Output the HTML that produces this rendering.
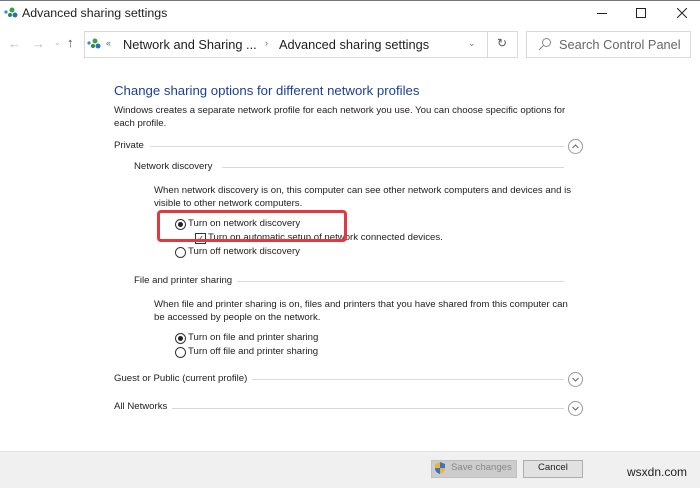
<!DOCTYPE html>
<html><head><style>
body{margin:0;width:700px;height:487px;background:#fff;font-family:"Liberation Sans",sans-serif;position:relative;overflow:hidden;color:#1e1e1e}
.a{position:absolute;white-space:nowrap}
.s{font-size:9.6px}
.line{position:absolute;height:1px;background:#d9d9d9}
.circ{position:absolute;width:15px;height:15px}
.rad{position:absolute;width:9px;height:9px;border:1px solid #333;border-radius:50%;background:#fff}
.rad.on::after{content:"";position:absolute;left:2px;top:2px;width:5px;height:5px;border-radius:50%;background:#222}
</style></head><body>
<div style="position:absolute;left:0;top:0;width:700px;height:1px;background:#777"></div>
<svg class="a" style="left:4px;top:6px" width="14" height="12"><circle cx="2" cy="6" r="1.6" fill="#2a8fd6"/><circle cx="8" cy="4" r="2.5" fill="#3aa04a"/><circle cx="11" cy="9" r="2.5" fill="#2a6fc0"/><circle cx="6" cy="9" r="2" fill="#2d8a3e"/></svg>
<div class="a" style="left:22px;top:6px;font-size:12.4px">Advanced sharing settings</div>
<div class="a" style="left:597px;top:13px;width:10px;height:1px;background:#222"></div>
<div class="a" style="left:636px;top:8px;width:8px;height:8px;border:1px solid #222"></div>
<svg class="a" style="left:677px;top:8px" width="10" height="10"><path d="M0 0L10 10M10 0L0 10" stroke="#222" stroke-width="1"/></svg>
<div class="a" style="left:8px;top:36px;font-size:13px;color:#bbb">←</div>
<div class="a" style="left:32px;top:36px;font-size:13px;color:#bbb">→</div>
<div class="a" style="left:54px;top:38px;font-size:8px;color:#bbb">⌄</div>
<div class="a" style="left:67px;top:35px;font-size:13px;color:#444">↑</div>
<div class="a" style="left:84px;top:31px;width:432px;height:25px;border:1px solid #d9d9d9"></div>
<div class="a" style="left:487px;top:31px;width:1px;height:26px;background:#d9d9d9"></div>
<svg class="a" style="left:87px;top:37px" width="14" height="12"><circle cx="2" cy="6" r="1.6" fill="#2a8fd6"/><circle cx="8" cy="4" r="2.5" fill="#3aa04a"/><circle cx="11" cy="9" r="2.5" fill="#2a6fc0"/><circle cx="6" cy="9" r="2" fill="#2d8a3e"/></svg>
<div class="a" style="left:106px;top:38px;font-size:9px;color:#666">«</div>
<div class="a" style="left:123px;top:37px;font-size:12.8px">Network and Sharing ...</div>
<div class="a" style="left:265px;top:38px;font-size:9px;color:#666">›</div>
<div class="a" style="left:279px;top:37px;font-size:12.8px">Advanced sharing settings</div>
<div class="a" style="left:468px;top:38px;font-size:9px;color:#777">⌄</div>
<div class="a" style="left:497px;top:36px;font-size:12px;color:#555">↻</div>
<div class="a" style="left:526px;top:31px;width:163px;height:25px;border:1px solid #d9d9d9"></div>
<svg class="a" style="left:538px;top:37px" width="14" height="14"><circle cx="8.5" cy="5.5" r="4" fill="none" stroke="#888"/><path d="M5.5 8.5L1 13" stroke="#888"/></svg>
<div class="a" style="left:559px;top:37px;font-size:12.8px;color:#666">Search Control Panel</div>

<div class="a" style="left:114px;top:83px;font-size:13.2px;color:#1c3f94">Change sharing options for different network profiles</div>
<div class="a s" style="left:114px;top:104px;line-height:13px">Windows creates a separate network profile for each network you use. You can choose specific options for<br>each profile.</div>
<div class="a s" style="left:114px;top:140px">Private</div>
<div class="line" style="left:150px;top:146px;width:414px"></div>
<svg class="circ" style="left:568px;top:139px"><circle cx="7.5" cy="7.5" r="7" fill="none" stroke="#999"/><path d="M4.5 9L7.5 6L10.5 9" fill="none" stroke="#666"/></svg>
<div class="a s" style="left:134px;top:161px">Network discovery</div>
<div class="line" style="left:222px;top:167px;width:342px"></div>
<div class="a s" style="left:154px;top:184px;line-height:13px">When network discovery is on, this computer can see other network computers and devices and is<br>visible to other network computers.</div>
<div class="rad on" style="left:175px;top:219px"></div>
<div class="a s" style="left:188px;top:218px">Turn on network discovery</div>
<div class="a" style="left:195px;top:233px;width:9px;height:9px;border:1px solid #333;font-size:8px;line-height:9px;text-align:center">✓</div>
<div class="a s" style="left:208px;top:232px">Turn on automatic setup of network connected devices.</div>
<div class="a" style="left:157px;top:210px;width:184px;height:26px;border:3px solid #e0393e;border-radius:4px"></div>
<div class="rad" style="left:175px;top:247px"></div>
<div class="a s" style="left:188px;top:246px">Turn off network discovery</div>
<div class="a s" style="left:134px;top:275px">File and printer sharing</div>
<div class="line" style="left:237px;top:281px;width:327px"></div>
<div class="a s" style="left:154px;top:298px;line-height:13px">When file and printer sharing is on, files and printers that you have shared from this computer can<br>be accessed by people on the network.</div>
<div class="rad on" style="left:175px;top:333px"></div>
<div class="a s" style="left:188px;top:332px">Turn on file and printer sharing</div>
<div class="rad" style="left:175px;top:347px"></div>
<div class="a s" style="left:188px;top:346px">Turn off file and printer sharing</div>
<div class="a s" style="left:114px;top:373px">Guest or Public (current profile)</div>
<div class="line" style="left:252px;top:379px;width:312px"></div>
<svg class="circ" style="left:568px;top:372px"><circle cx="7.5" cy="7.5" r="7" fill="none" stroke="#999"/><path d="M4.5 6L7.5 9L10.5 6" fill="none" stroke="#666"/></svg>
<div class="a s" style="left:114px;top:401px">All Networks</div>
<div class="line" style="left:172px;top:408px;width:392px"></div>
<svg class="circ" style="left:568px;top:401px"><circle cx="7.5" cy="7.5" r="7" fill="none" stroke="#999"/><path d="M4.5 6L7.5 9L10.5 6" fill="none" stroke="#666"/></svg>

<div class="a" style="left:0;top:451px;width:700px;height:36px;background:#f0f0f0;border-top:1px solid #e3e3e3"></div>
<div class="a" style="left:431px;top:460px;width:84px;height:16px;background:#ccc;border:1px solid #c0c0c0"></div>
<svg class="a" style="left:434px;top:461px" width="12" height="14"><path d="M6 1L11 3V7C11 10 9 12 6 13C3 12 1 10 1 7V3Z" fill="#e8b73a"/><path d="M6 1V7H11V3Z M1 7H6V13C3 12 1 10 1 7Z" fill="#3a73c4"/></svg>
<div class="a s" style="left:451px;top:462px;color:#888">Save changes</div>
<div class="a" style="left:523px;top:460px;width:58px;height:16px;background:#e1e1e1;border:1px solid #adadad"></div>
<div class="a s" style="left:538px;top:462px">Cancel</div>
<div class="a" style="left:627px;top:465px;font-size:12px;color:#222">wsxdn.com</div>
</body></html>
